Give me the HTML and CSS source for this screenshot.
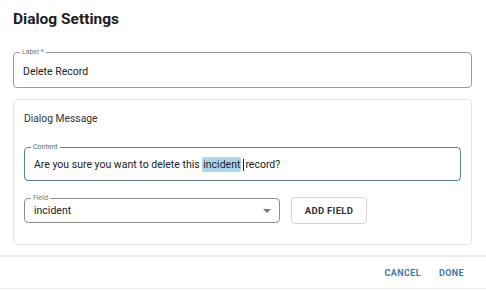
FILE: index.html
```html
<!DOCTYPE html>
<html lang="en">
  <head>
    <meta charset="UTF-8" />
    <title>Dialog Settings</title>
    <link rel="stylesheet" href="styles.css">
  </head>
  <body>
    <div class="dialog">
      <div class="dialog-body">
        <h2 class="title">Dialog Settings</h2>
        <div class="outlined label-field">
          <span class="float-label">Label *</span>
          <span class="value">Delete Record</span>
        </div>
        <div class="card">
          <p class="card-title">Dialog Message</p>
          <div class="outlined content-field">
            <span class="float-label">Content</span>
            <span class="value">Are you sure you want to delete this <mark class="token">incident</mark><span class="caret"></span>record?</span>
          </div>
          <div class="field-row">
            <div class="outlined select-field">
              <span class="float-label">Field</span>
              <span class="value">incident</span>
              <svg class="arrow" width="8" height="4" viewBox="0 0 8 4"><path d="M0 0h8L4 4z" /></svg>
            </div>
            <button class="add-btn">ADD FIELD</button>
          </div>
        </div>
      </div>
      <div class="dialog-actions">
        <button class="text-btn">CANCEL</button>
        <button class="text-btn">DONE</button>
      </div>
    </div>
  </body>
</html>
```

FILE: styles.css
```css
* {
  margin: 0;
  padding: 0;
  box-sizing: border-box;
}
body {
  font-family: Roboto, "Liberation Sans", sans-serif;
  background: #fff;
  color: #222;
  width: 486px;
  height: 290px;
  overflow: hidden;
}

.dialog-body {
  padding: 9px 14px 0 13px;
  height: 255px;
}
.title {
  font-size: 15.5px;
  font-weight: 700;
  color: #1d1d1d;
  line-height: 20px;
  margin-bottom: 23px;
}

.outlined {
  position: relative;
  border: 1px solid #9a9a9a;
  border-radius: 4px;
  display: flex;
  align-items: center;
}
.float-label {
  position: absolute;
  top: -5px;
  left: 6px;
  padding: 0 2px;
  background: #fff;
  font-size: 7px;
  line-height: 9px;
  color: #777;
}
.value {
  font-size: 10.5px;
  color: #222;
}

.label-field {
  height: 36px;
  padding: 2px 0 0 9px;
}

.card {
  margin-top: 11px;
  border: 1px solid #e4e4e4;
  border-radius: 4px;
  padding: 12px 10px 20px 10px;
}
.card-title {
  font-size: 10.3px;
  color: #333;
  line-height: 14px;
  margin-bottom: 21px;
}
.content-field {
  height: 34px;
  border: 1.5px solid #5c7f95;
  padding: 0 0 0 9px;
}
.content-field .float-label {
  color: #4d6f85;
}
.token {
  background: #a9d6e8;
  color: #222;
  border-radius: 2px;
  padding: 1px 1px;
}
.caret {
  display: inline-block;
  width: 1px;
  height: 12px;
  background: #222;
  vertical-align: -3px;
  margin: 0 1px 0 2px;
}

.field-row {
  display: flex;
  align-items: center;
  gap: 11px;
  margin-top: 16px;
}
.select-field {
  width: 256px;
  height: 25px;
  border-color: #8c8c8c;
  padding: 0 0 0 9px;
  justify-content: space-between;
}
.arrow {
  fill: #777;
  margin-right: 8px;
}
.add-btn {
  width: 76px;
  height: 27px;
  border: 1px solid #d4d4d4;
  border-radius: 4px;
  background: #fff;
  font-family: inherit;
  font-size: 9.5px;
  font-weight: 700;
  color: #333;
  letter-spacing: 0.3px;
}

.dialog-actions {
  border-top: 2px solid #eee;
  border-bottom: 1px solid #eee;
  height: 34px;
  display: flex;
  justify-content: flex-end;
  align-items: center;
  gap: 18px;
  padding-right: 22px;
}
.text-btn {
  background: none;
  border: none;
  font-family: inherit;
  font-size: 9px;
  font-weight: 700;
  letter-spacing: 0.4px;
  color: #3d7bab;
}
```
